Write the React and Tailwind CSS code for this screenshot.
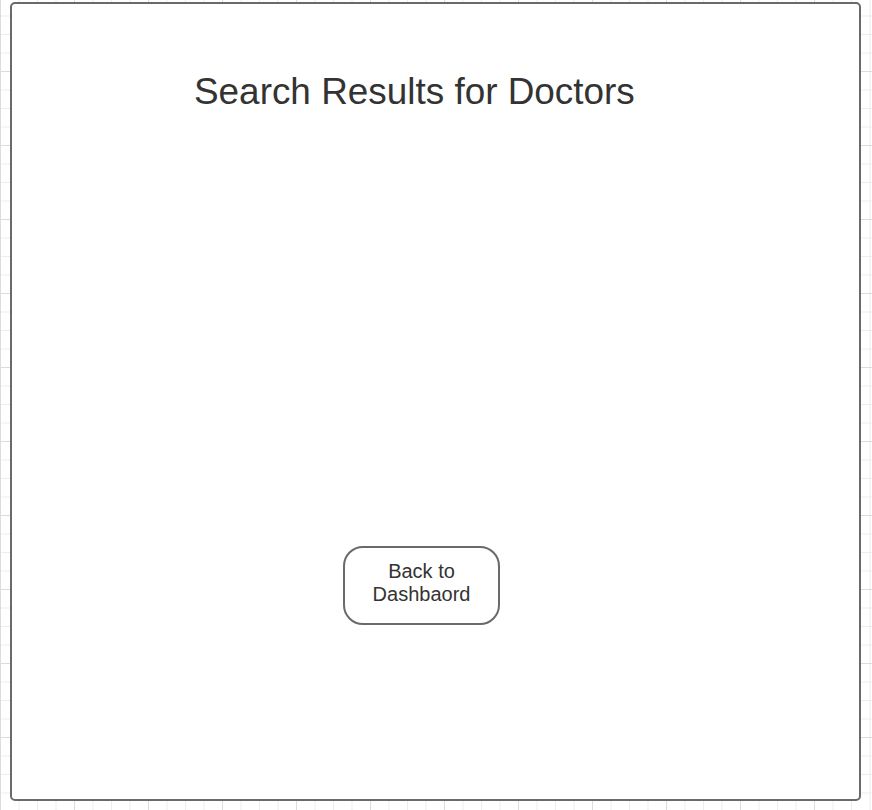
export default function App() {
  return (
    <div
      className="w-[872px] h-[810px] overflow-hidden bg-white pt-[2px] pl-[10px] bg-[linear-gradient(to_right,#dcdcdc_1px,transparent_1px),linear-gradient(to_bottom,#dcdcdc_1px,transparent_1px),linear-gradient(to_right,#ededed_1px,transparent_1px),linear-gradient(to_bottom,#ededed_1px,transparent_1px)] bg-[size:74px_74px,74px_74px,18.5px_18.5px,18.5px_18.5px] bg-[position:0_-3px]"
      style={{ fontFamily: '"Liberation Sans", Arial, sans-serif' }}
    >
      <div className="w-[851px] h-[799px] border-2 border-[#6a6a6a] rounded-[5px] bg-white flex flex-col">
        {/* Title */}
        <h1 className="mt-[66px] ml-[182px] text-[36.9px] leading-[44px] text-[#333333] font-normal whitespace-nowrap">
          Search Results for Doctors
        </h1>

        {/* Back button */}
        <button className="mt-[432px] ml-[331px] w-[157px] h-[79px] pb-[5px] border-2 border-[#6a6a6a] rounded-[20px] bg-white text-[20px] leading-[23px] text-[#333333] flex items-center justify-center text-center">
          Back to
          <br />
          Dashbaord
        </button>
      </div>
    </div>
  );
}
